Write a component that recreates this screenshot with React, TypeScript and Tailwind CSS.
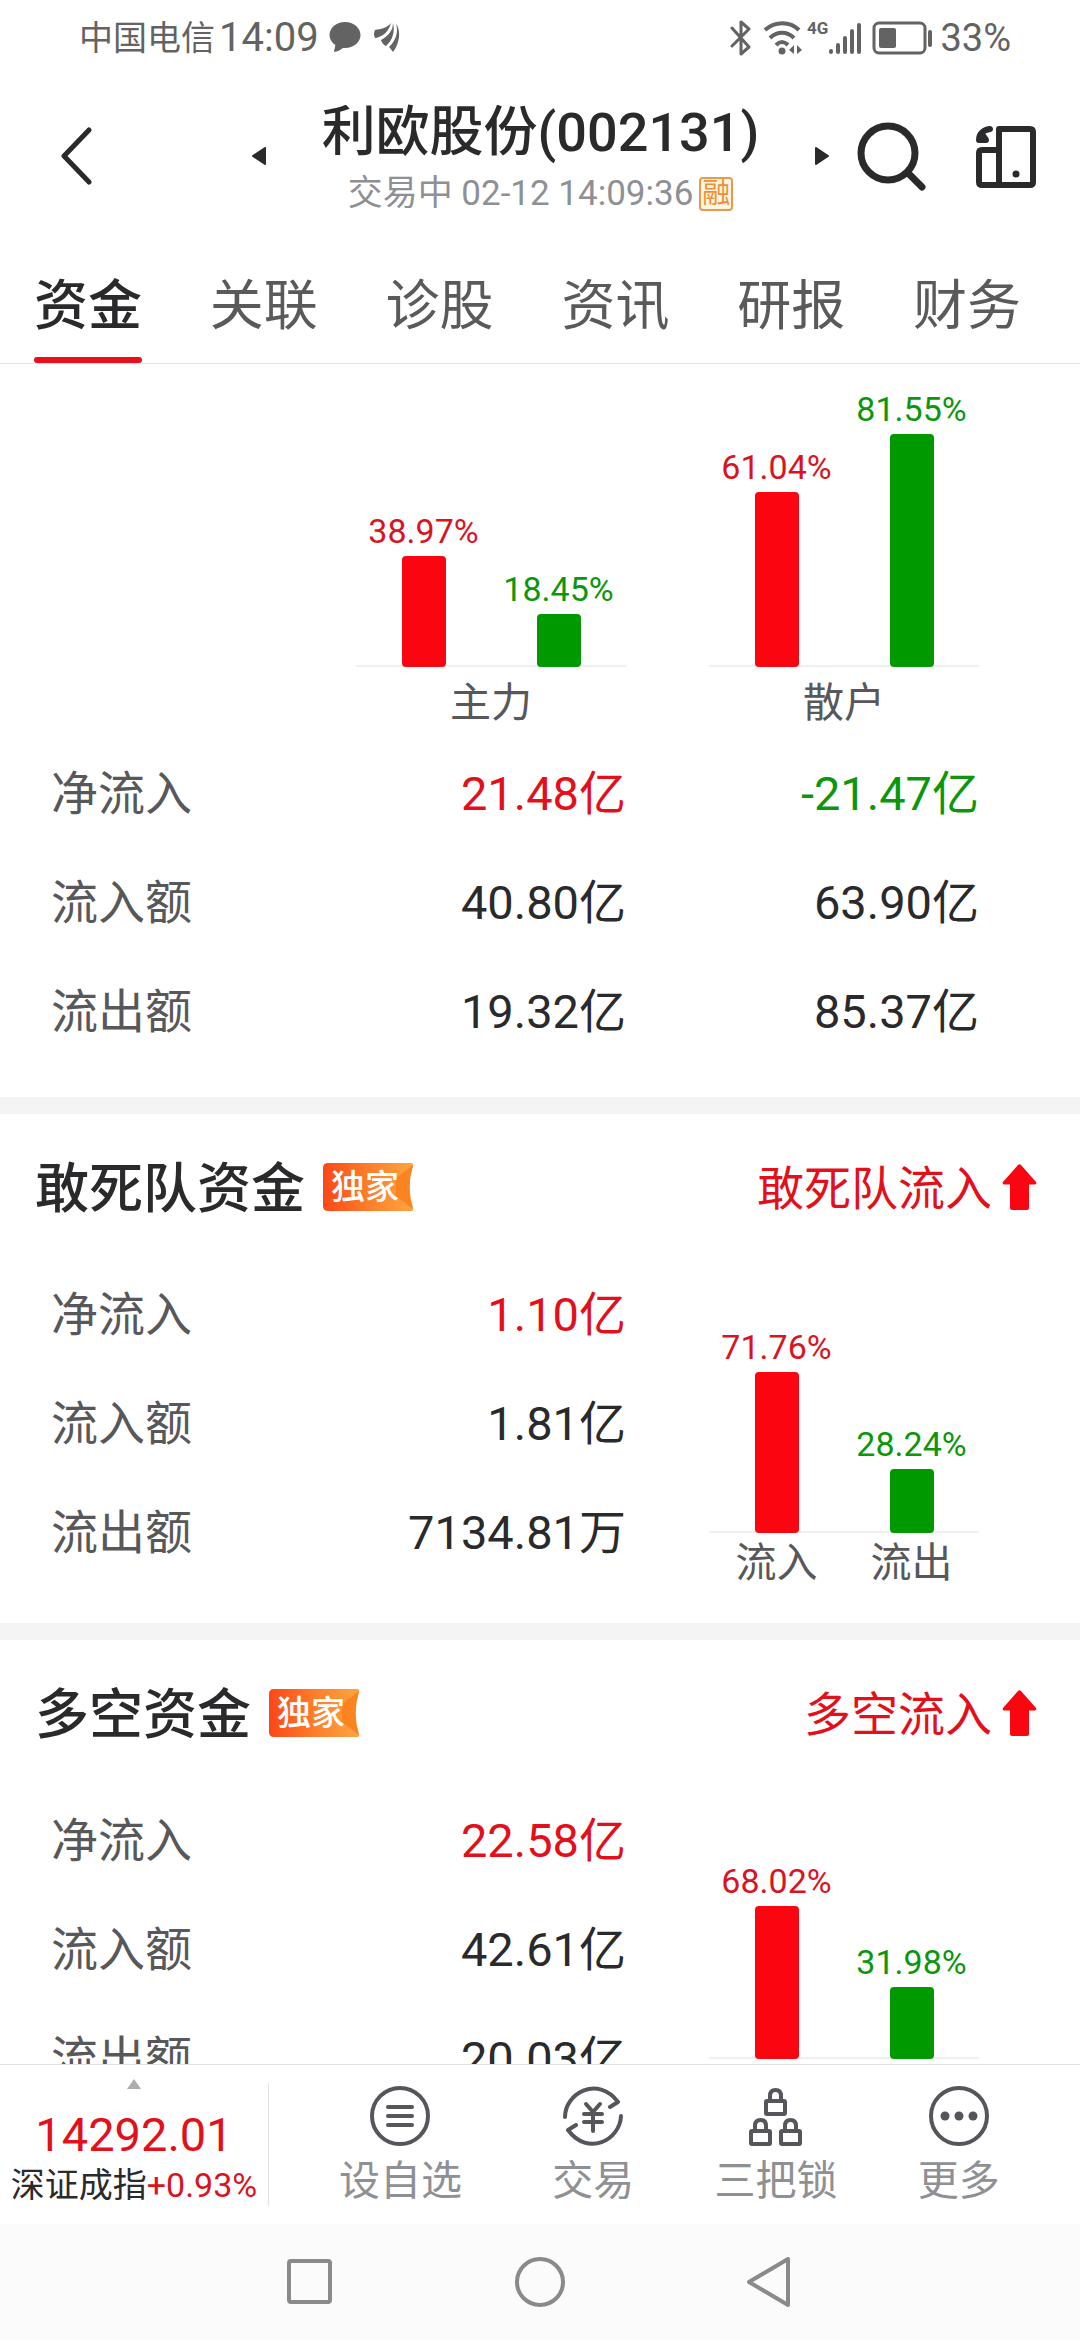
import type { ReactNode } from 'react';

interface Bar {
  value: number;
  tone: 'up' | 'down';
  label?: string;
}

interface FundRow {
  name: string;
  values: string[];
  tones?: string[];
}

const TABS = ['资金', '关联', '诊股', '资讯', '研报', '财务'];

const MAIN_ROWS: FundRow[] = [
  { name: '净流入', values: ['21.48亿', '-21.47亿'], tones: ['text-[#e3101c]', 'text-[#0c960c]'] },
  { name: '流入额', values: ['40.80亿', '63.90亿'] },
  { name: '流出额', values: ['19.32亿', '85.37亿'] },
];

const PANELS = [
  {
    title: '敢死队资金',
    trend: '敢死队流入',
    rows: [
      { name: '净流入', values: ['1.10亿'], tones: ['text-[#e3101c]'] },
      { name: '流入额', values: ['1.81亿'] },
      { name: '流出额', values: ['7134.81万'] },
    ] as FundRow[],
    bars: [
      { value: 71.76, tone: 'up', label: '流入' },
      { value: 28.24, tone: 'down', label: '流出' },
    ] as Bar[],
  },
  {
    title: '多空资金',
    trend: '多空流入',
    rows: [
      { name: '净流入', values: ['22.58亿'], tones: ['text-[#e3101c]'] },
      { name: '流入额', values: ['42.61亿'] },
      { name: '流出额', values: ['20.03亿'] },
    ] as FundRow[],
    bars: [
      { value: 68.02, tone: 'up', label: '流入' },
      { value: 31.98, tone: 'down', label: '流出' },
    ] as Bar[],
  },
];

const StatusBar = () => (
  <div className="flex h-[76px] items-center justify-between pl-[79px] pr-[69px] text-[#636363]">
    <div className="flex items-center">
      <span className="text-[34px] leading-[40px]">中国电信</span>
      <span className="ml-1 text-[40px] leading-[40px]">14:09</span>
      <svg className="ml-2.5 h-8 w-8" viewBox="0 0 32 32" fill="currentColor">
        <path d="M16 0C7.400 0 0.500 5.800 0.500 13c0 4 2.200 7.600 5.800 10-.2 2-.6 4-1.200 5.600-.3.900.3 1.500 1.200 1.200 3-.9 5.600-2.300 7.500-3.900.7.100 1.500.1 2.200.1 8.600 0 15.500-5.800 15.500-13S24.600 0 16 0Z" />
      </svg>
      <svg className="ml-3 h-8 w-7" viewBox="0 0 28 32" fill="currentColor">
        <path d="M18 1C14 6 8 7 2 8Q0 12 2 16C10 15 16 9 18 1Z" />
        <path d="M20 1C20 9 15 14 8 18Q9 22 13 24C20 18 22 9 20 1Z" />
        <path d="M23 2C26 11 22 19 16 25Q18 27 20 30C27 21 28 8 23 2Z" />
      </svg>
    </div>
    <div className="flex items-center">
      <svg className="h-9 w-6" viewBox="0 0 24 36" fill="none" stroke="currentColor" strokeWidth="3" strokeLinecap="round" strokeLinejoin="round">
        <path d="M3 8l17 19-8 7V2l8 7L3 26" />
      </svg>
      <svg className="ml-2.5 h-9 w-10" viewBox="0 0 40 36" fill="none" stroke="currentColor" strokeWidth="4">
        <path d="M2 10c10-9 25-9 34 0M7 18c7-7 17-7 24 0M13 25c4-4 8-4 12 0" />
        <circle cx="19" cy="31" r="3.500" fill="currentColor" stroke="none" />
        <path d="M26 30l5-5v9M34 34v-9l5 5" fill="currentColor" stroke="none" />
      </svg>
      <span className="ml-1 self-start text-[17px] font-bold leading-[20px]">4G</span>
      <svg className="h-9 w-[34px]" viewBox="0 0 34 36" stroke="currentColor" strokeWidth="4" strokeLinecap="round">
        <path d="M3 31v1M10 25v7M17 18v14M24 11v21M31 5v27" />
      </svg>
      <svg className="ml-2.5 h-9 w-[60px]" viewBox="0 0 60 36" fill="none" stroke="currentColor" strokeWidth="3">
        <rect x="2" y="3" width="51" height="30" rx="5" />
        <rect x="7" y="8" width="17" height="20" rx="2" fill="currentColor" stroke="none" />
        <path d="M58 12v13" strokeWidth="4" strokeLinecap="round" />
      </svg>
      <span className="ml-2 text-[38px] leading-[40px]">33%</span>
    </div>
  </div>
);

const Header = () => (
  <header className="flex h-40 items-center pl-[60px] pr-[43px] text-[#2a2a2c]">
    <button type="button" aria-label="返回">
      <svg className="h-[58px] w-8" viewBox="0 0 32 58" fill="none" stroke="currentColor" strokeWidth="5" strokeLinecap="round" strokeLinejoin="round">
        <path d="M29 3L4 29l25 26" />
      </svg>
    </button>
    <div className="flex flex-1 items-center justify-between pl-40 pr-7">
      <button type="button" aria-label="上一只">
        <svg className="h-[18px] w-3.5" viewBox="0 0 14 18" fill="currentColor" stroke="currentColor" strokeWidth="2" strokeLinejoin="round">
          <path d="M1 9l12-8v16Z" />
        </svg>
      </button>
      <div className="flex flex-col items-center pt-4">
        <h1 className="text-[54px] font-medium leading-[60px]">利欧股份(002131)</h1>
        <p className="flex items-center gap-1.5 text-[35px] leading-[62px] text-[#8f9094]">
          交易中 02-12 14:09:36
          <span className="flex h-[34px] w-[34px] items-center justify-center rounded border-2 border-[#e69a50] bg-[#fff6e0] text-[28px] leading-none text-[#ee8f37]">
            融
          </span>
        </p>
      </div>
      <button type="button" aria-label="下一只">
        <svg className="h-[18px] w-3.5" viewBox="0 0 14 18" fill="currentColor" stroke="currentColor" strokeWidth="2" strokeLinejoin="round">
          <path d="M13 9L1 1v16Z" />
        </svg>
      </button>
    </div>
    <button type="button" aria-label="搜索">
      <svg className="h-[70px] w-[70px]" viewBox="0 0 70 70" fill="none" stroke="currentColor" strokeWidth="7" strokeLinecap="round">
        <circle cx="31" cy="32" r="27" />
        <path d="M52 53l13 13" />
      </svg>
    </button>
    <button type="button" aria-label="横屏" className="ml-12">
      <svg className="h-16 w-[62px]" viewBox="0 0 62 64" fill="none" stroke="currentColor" strokeWidth="6" strokeLinejoin="round">
        <path d="M24 5h31q3 0 3 3v50q0 3-3 3H24Z" />
        <path d="M24 26H7q-3 0-3 3v29q0 3 3 3h17" />
        <circle cx="41" cy="50" r="3.500" fill="currentColor" stroke="none" />
        <path d="M15 5C8 6 4 10 4 16h7L9 13" strokeLinecap="round" />
      </svg>
    </button>
  </header>
);

const Tabs = () => (
  <nav className="flex h-[128px] justify-between border-b border-[#e5e5e5] pl-[34px] pr-[59px]">
    {TABS.map((tab, i) => (
      <button
        key={tab}
        type="button"
        className={
          i === 0
            ? 'relative pt-3.5 text-[54px] font-medium leading-[60px] text-[#2a2a2c]'
            : 'pt-3.5 text-[54px] leading-[60px] text-[#5a5a5c]'
        }
      >
        {tab}
        {i === 0 && <span className="absolute inset-x-0 bottom-0 h-1.5 rounded-full bg-[#ea0f1c]" />}
      </button>
    ))}
  </nav>
);

const BarChart = ({ bars, scale }: { bars: Bar[]; scale: number }) => (
  <div className="w-[270px]">
    <div className="flex items-end border-b-2 border-[#f0f0f0]">
      {bars.map((bar) => (
        <div key={bar.tone} className="flex flex-1 flex-col items-center">
          <span
            className={
              bar.tone === 'up'
                ? 'mb-2 text-[34px] leading-[34px] text-[#d9141f]'
                : 'mb-2 text-[34px] leading-[34px] text-[#0c960c]'
            }
          >
            {bar.value.toFixed(2)}%
          </span>
          <span
            className={
              bar.tone === 'up'
                ? '-mb-0.5 w-11 rounded bg-[#fb0511]'
                : '-mb-0.5 w-11 rounded bg-[#009900]'
            }
            style={{ height: Math.round(bar.value * scale) }}
          />
        </div>
      ))}
    </div>
    {bars[0].label && (
      <div className="mt-2.5 flex text-[41px] leading-[41px] text-[#58585a]">
        {bars.map((bar) => (
          <span key={bar.tone} className="flex-1 text-center">
            {bar.label}
          </span>
        ))}
      </div>
    )}
  </div>
);

const FundTable = ({ rows }: { rows: FundRow[] }) => (
  <table className="w-full text-[47px] leading-[47px]">
    <tbody>
      {rows.map((row) => (
        <tr key={row.name} className="h-[109px]">
          <th scope="row" className="pt-1.5 text-left font-normal text-[#58585a]">
            {row.name}
          </th>
          {row.values.map((value, i) => (
            <td
              key={value}
              className={`pt-1.5 text-right ${i === 1 ? 'w-[353px]' : ''} ${row.tones ? row.tones[i] : 'text-[#2a2a2c]'}`}
            >
              {value}
            </td>
          ))}
        </tr>
      ))}
    </tbody>
  </table>
);

const ExclusiveBadge = () => (
  <span className="relative flex h-12 w-[91px] items-center pl-2 text-[34px] font-medium leading-none text-white">
    <svg className="absolute inset-0 h-full w-full" viewBox="0 0 91 48">
      <defs>
        <linearGradient id="badge" x1="0" y1="0" x2="1" y2="0">
          <stop offset="0" stopColor="#fb4718" />
          <stop offset="0.500" stopColor="#fc7e2a" />
          <stop offset="1" stopColor="#fda540" />
        </linearGradient>
      </defs>
      <path d="M5 0h83q3 0 2 3-7 21 0 42 1 3-2 3H5q-5 0-5-5V5q0-5 5-5Z" fill="url(#badge)" />
      <path d="M90 2L73 15v18l17 13q-7-22 0-44Z" fill="#fc8420" />
    </svg>
    <span className="relative">独家</span>
  </span>
);

const Panel = ({ title, trend, rows, bars }: (typeof PANELS)[number]) => (
  <section className="border-b-[17px] border-[#f4f4f4] pb-[39px] pt-[46px]">
    <div className="flex h-[54px] items-center justify-between pl-[35px] pr-[43px]">
      <div className="flex items-center gap-[18px]">
        <h2 className="pt-1.5 text-[54px] font-medium leading-[54px] text-[#2a2a2c]">{title}</h2>
        <ExclusiveBadge />
      </div>
      <div className="flex items-center gap-2.5 text-[47px] leading-[47px] text-[#e3101c]">
        <span className="pt-0.5">{trend}</span>
        <svg className="h-[46px] w-[35px]" viewBox="0 0 35 46" fill="#fb0511">
          <path d="M16 1q1.500-1.500 3 0l15 17q1 2-1 2.500h-6V44q0 2-2 2H10q-2 0-2-2V20.500H2Q0 20 1 18Z" />
        </svg>
      </div>
    </div>
    <div className="mt-[43px] flex items-end gap-[83px] pl-[51px] pr-[101px]">
      <FundTable rows={rows} />
      <div className="shrink-0">
        <BarChart bars={bars} scale={2.25} />
      </div>
    </div>
  </section>
);

const Lock = ({ x, y }: { x: number; y: number }) => (
  <g transform={`translate(${x} ${y})`}>
    <rect x="0" y="11" width="19" height="13" rx="1" />
    <path d="M4 11V6q0-6 5.500-6T15 6v5" />
  </g>
);

const Action = ({ label, children }: { label: string; children: ReactNode }) => (
  <button type="button" className="flex flex-col items-center pt-5 text-[#8f9094]">
    <svg className="h-[62px] w-[62px] text-[#55555c]" viewBox="0 0 62 62" fill="none" stroke="currentColor" strokeWidth="4" strokeLinecap="round" strokeLinejoin="round">
      {children}
    </svg>
    <span className="mt-3.5 text-[41px] leading-[41px]">{label}</span>
  </button>
);

const BottomBar = () => (
  <footer className="flex h-40 border-t border-[#e2e2e2]">
    <button type="button" className="my-[18px] flex w-[269px] flex-col items-center border-r border-[#e2e2e2]">
      <svg className="-mt-1 h-2.5 w-3.5" viewBox="0 0 14 10" fill="#aeaeae">
        <path d="M7 0l7 10H0Z" />
      </svg>
      <span className="mt-[22px] text-[47px] leading-[47px] text-[#e3101c]">14292.01</span>
      <span className="mt-2.5 whitespace-nowrap text-[34px] leading-[34px] text-[#2a2a2c]">
        深证成指<span className="text-[#d9141f]">+0.93%</span>
      </span>
    </button>
    <div className="grid flex-1 grid-cols-[10fr_9fr_9fr_9fr] pl-[30px] pr-[30px]">
      <Action label="设自选">
        <circle cx="31" cy="31" r="28" />
        <path d="M19 22h24M19 31h24M19 40h24" />
      </Action>
      <Action label="交易">
        <path d="M3 32C3 8 36-10 56 17l-8 5M59 31C58 55 26 72 6 45l8-5" />
        <path d="M24 19l7 8 7-8M31 27v19M22 29h18M22 37h18" />
      </Action>
      <Action label="三把锁">
        <Lock x={21} y={5} />
        <Lock x={6} y={35} />
        <Lock x={36} y={35} />
      </Action>
      <Action label="更多">
        <circle cx="31" cy="31" r="28" />
        <g fill="currentColor" stroke="none">
          <circle cx="17" cy="31" r="4.500" />
          <circle cx="31" cy="31" r="4.500" />
          <circle cx="45" cy="31" r="4.500" />
        </g>
      </Action>
    </div>
  </footer>
);

const SystemNav = () => (
  <div className="flex h-[116px] items-center justify-center gap-[180px] bg-[#fbfbfb] text-[#8a8a8a]">
    <button type="button" aria-label="最近任务">
      <svg className="h-[50px] w-[50px]" viewBox="0 0 50 50" fill="none" stroke="currentColor" strokeWidth="4">
        <rect x="4" y="4" width="41" height="41" rx="2" />
      </svg>
    </button>
    <button type="button" aria-label="主屏幕">
      <svg className="h-[50px] w-[50px]" viewBox="0 0 50 50" fill="none" stroke="currentColor" strokeWidth="4">
        <circle cx="25" cy="25" r="23" />
      </svg>
    </button>
    <button type="button" aria-label="后退">
      <svg className="h-[50px] w-[50px]" viewBox="0 0 50 50" fill="none" stroke="currentColor" strokeWidth="4" strokeLinejoin="round">
        <path d="M43 2v46L4 25Z" />
      </svg>
    </button>
  </div>
);

export default function App() {
  return (
    <div className="flex h-screen flex-col bg-white font-[Roboto,'Noto_Sans_CJK_SC',sans-serif]">
      <StatusBar />
      <Header />
      <Tabs />
      <main className="min-h-0 flex-1 overflow-y-auto [scrollbar-width:none]">
        <section className="border-b-[17px] border-[#f4f4f4] pb-[34px] pl-[51px] pr-[101px] pt-7">
          <div className="flex items-end justify-end gap-[83px]">
            <figure>
              <BarChart
                scale={2.86}
                bars={[
                  { value: 38.97, tone: 'up' },
                  { value: 18.45, tone: 'down' },
                ]}
              />
              <figcaption className="mt-4 text-center text-[41px] leading-[41px] text-[#58585a]">主力</figcaption>
            </figure>
            <figure>
              <BarChart
                scale={2.86}
                bars={[
                  { value: 61.04, tone: 'up' },
                  { value: 81.55, tone: 'down' },
                ]}
              />
              <figcaption className="mt-4 text-center text-[41px] leading-[41px] text-[#58585a]">散户</figcaption>
            </figure>
          </div>
          <div className="mt-3">
            <FundTable rows={MAIN_ROWS} />
          </div>
        </section>
        {PANELS.map((panel) => (
          <Panel key={panel.title} {...panel} />
        ))}
      </main>
      <BottomBar />
      <SystemNav />
    </div>
  );
}
